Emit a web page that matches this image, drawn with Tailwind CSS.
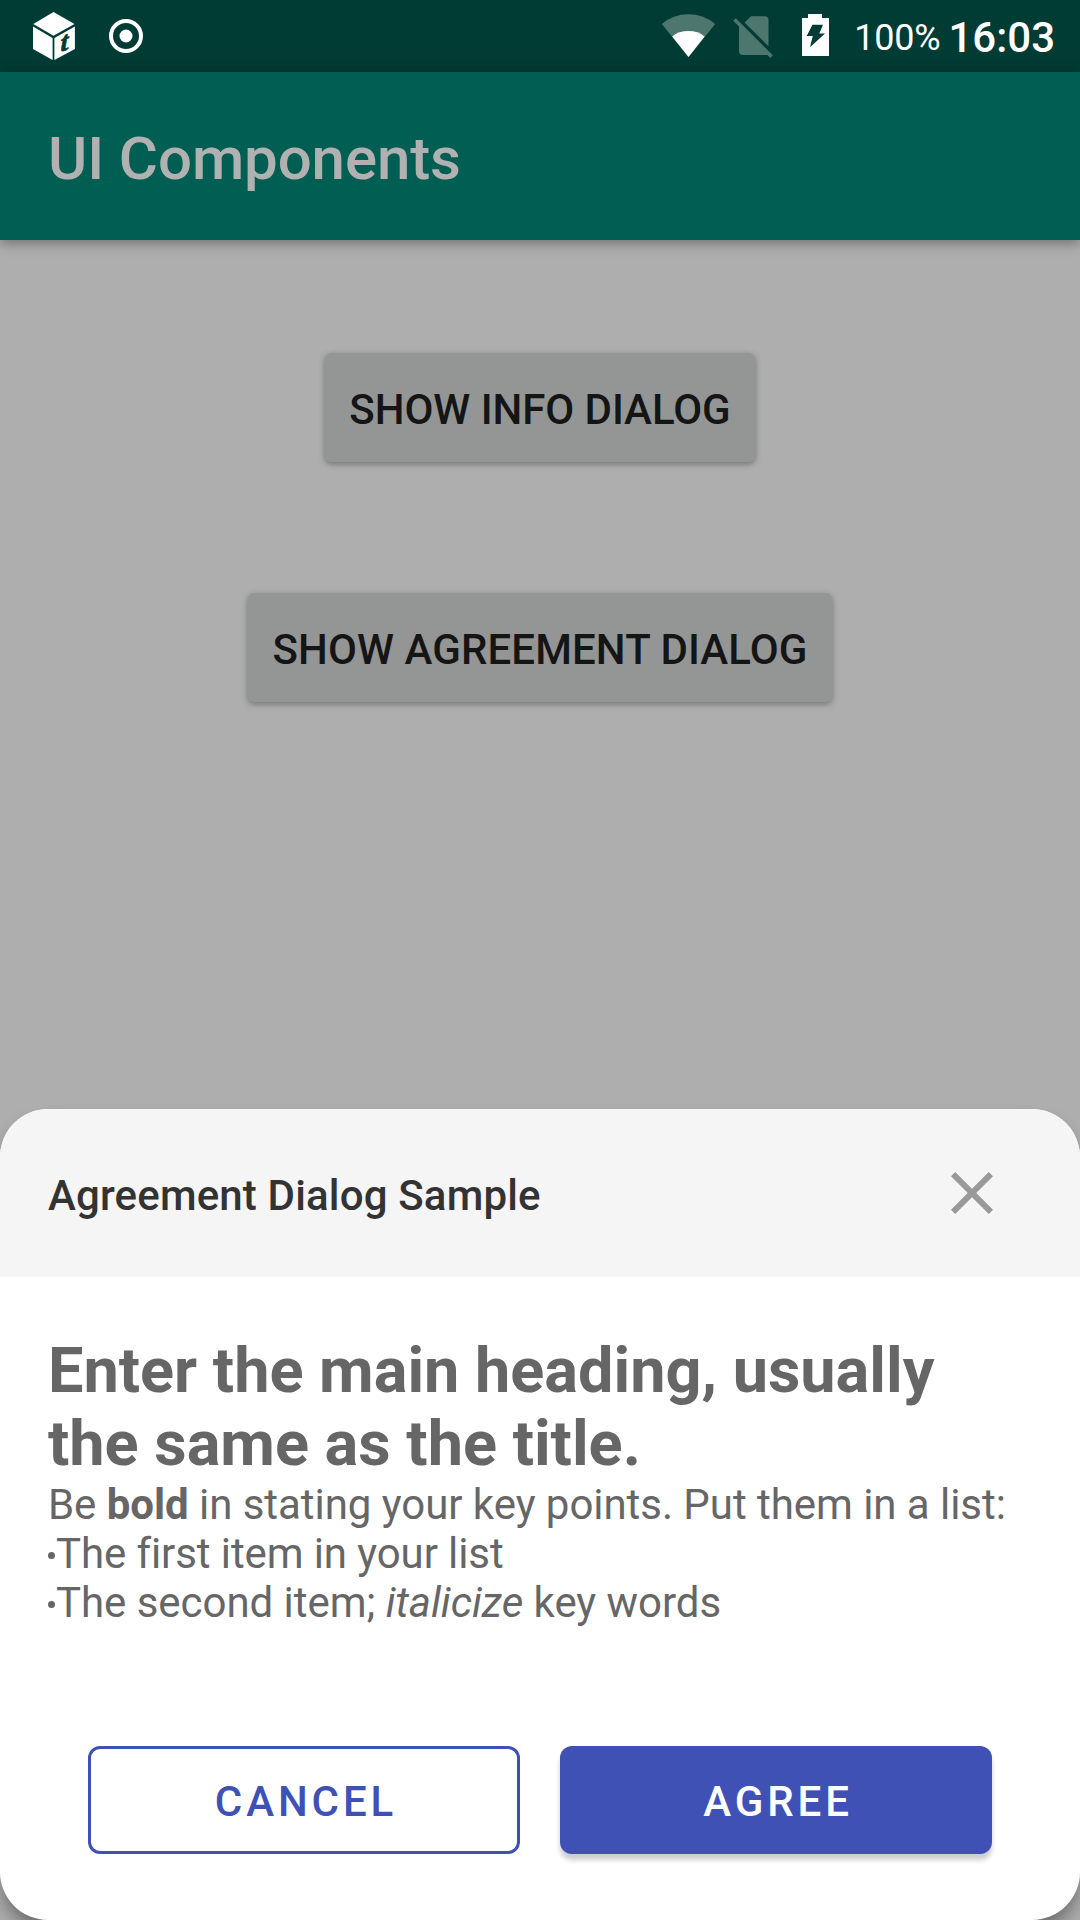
<!DOCTYPE html>
<html lang="en">
<head>
<meta charset="utf-8">
<title>UI Components</title>
<script src="https://cdn.jsdelivr.net/npm/@tailwindcss/browser@4"></script>
</head>
<body class="overflow-hidden font-['Roboto',sans-serif]">
<div class="flex h-[1920px] w-[1080px] flex-col overflow-hidden bg-[#aeaeae]">
  <!-- Status bar -->
  <div class="flex h-[72px] shrink-0 items-start bg-[#003b34] text-white">
    <svg class="ml-[30px] h-[72px] w-12" viewBox="30 0 48 72" fill="#fff">
      <path d="M53.5 12 74.5 24 53.5 35.7 33.3 24z"/>
      <path d="M33 26.6 52.6 38v22L33 48.9z"/>
      <path d="M74.9 26.6 54.4 38v22l20.5-11.1z"/>
      <text x="0" y="0" transform="translate(60.4 52) skewY(-20) scale(1.05 1)" font-family="Liberation Serif, serif" font-weight="700" font-style="italic" font-size="27" fill="#003b34" stroke="#003b34" stroke-width=".7">t</text>
    </svg>
    <svg class="ml-[30px] h-[72px] w-9" viewBox="108 0 36 72" fill="none">
      <circle cx="126" cy="36" r="15" stroke="#fff" stroke-width="4"/>
      <circle cx="126" cy="36" r="6.5" fill="#fff"/>
    </svg>
    <div class="grow"></div>
    <svg class="h-[72px] w-14" viewBox="660 0 56 72">
      <path d="M688.5 57 661.8 24Q673 14.2 688.5 14.2T715.2 24z" fill="#4d766f"/>
      <path d="M688.5 57 672.2 36.4Q679 31 688.5 31T704.600 36.400z" fill="#fff"/>
    </svg>
    <svg class="ml-4 h-[72px] w-11" viewBox="732 0 44 72" fill="#4d766f">
      <path d="M744.600 22.500 751 16.300h13.500a4 4 0 0 1 4 4v26z"/>
      <path d="M735.800 18.200 772.800 55.200 770.300 57.900 767.300 54.900H743a4 4 0 0 1-4-4V26.600L733.200 20.800z"/>
    </svg>
    <svg class="ml-[22px] h-[72px] w-8" viewBox="798 0 32 72">
      <path fill="#fff" fill-rule="evenodd" d="M808 14h14v4h7v38h-27V18h6zM812.500 24.700 806.700 36h6.100L810 47.200 825 33.500h-5.700L823 24.700z"/>
    </svg>
    <span class="ml-[24px] pt-[17px] text-[36px] leading-[42px] tracking-[-0.2px]">100%</span>
    <span class="mr-[25px] ml-[8px] pt-[13px] text-[42px] leading-[49px] font-medium">16:03</span>
  </div>
  <!-- App bar -->
  <div class="relative flex h-[168px] shrink-0 items-center bg-[#005e52] px-12 pt-1.5 shadow-[0_3px_12px_rgba(0,0,0,0.36)]">
    <h1 class="text-[60px] leading-[70px] font-medium tracking-[-0.1px] text-[#b1b1b1]">UI Components</h1>
  </div>
  <!-- Page content -->
  <div class="flex h-[869px] shrink-0 flex-col items-center pt-[113px]">
    <button class="h-[109px] w-[430px] rounded-[6px] bg-[#949695] pt-1 text-[42px] font-medium tracking-[-0.06px] whitespace-nowrap text-[#151515] shadow-[0_2px_6px_rgba(0,0,0,0.35)]">SHOW INFO DIALOG</button>
    <button class="mt-[131px] h-[109px] w-[584px] rounded-[6px] bg-[#949695] pt-1 text-[42px] font-medium tracking-[0.1px] whitespace-nowrap text-[#151515] shadow-[0_2px_6px_rgba(0,0,0,0.35)]">SHOW AGREEMENT DIALOG</button>
  </div>
  <!-- Bottom sheet -->
  <div class="flex h-[811px] shrink-0 flex-col overflow-hidden rounded-[48px] bg-white shadow-[0_12px_20px_-4px_rgba(0,0,0,0.45)]">
    <div class="flex h-[168px] shrink-0 items-center justify-between bg-[#f5f5f5] pr-[72px] pl-12">
      <h2 class="pt-[5px] text-[42px] leading-[49px] font-medium tracking-[0.16px] text-[#333]">Agreement Dialog Sample</h2>
      <svg class="size-[72px]" viewBox="0 0 24 24" fill="#999"><path d="M19 6.41 17.590 5 12 10.590 6.410 5 5 6.410 10.590 12 5 17.590 6.410 19 12 13.410 17.590 19 19 17.590 13.410 12z"/></svg>
    </div>
    <div class="h-[469px] shrink-0 px-12 pt-[57px] text-[42px] leading-[49px] tracking-[-0.045px] text-[#666]">
      <h3 class="text-[63px] leading-[73px] font-bold tracking-normal">Enter the main heading, usually<br>the same as the title.</h3>
      <p class="whitespace-nowrap">Be <b>bold</b> in stating your key points. Put them in a list:</p>
      <ul>
        <li class="flex items-center gap-px"><span class="mt-[3px] size-[7px] rounded-full bg-[#666]"></span><span class="tracking-[-0.1px]">The first item in your list</span></li>
        <li class="flex items-center gap-px"><span class="mt-[3px] size-[7px] rounded-full bg-[#666]"></span><span>The second item; <i>italicize</i> key words</span></li>
      </ul>
    </div>
    <div class="flex gap-10 px-[88px] text-[42px] font-medium tracking-[3.9px]">
      <button class="h-[108px] w-[432px] rounded-[12px] border-3 border-[#3f51b5] pt-[3px] pl-1 text-[#3f51b5]">CANCEL</button>
      <button class="h-[108px] w-[432px] rounded-[12px] bg-[#3f51b5] pt-[3px] pl-1 text-white shadow-[0_6px_5px_rgba(0,0,0,0.2)]">AGREE</button>
    </div>
  </div>
</div>
</body>
</html>
